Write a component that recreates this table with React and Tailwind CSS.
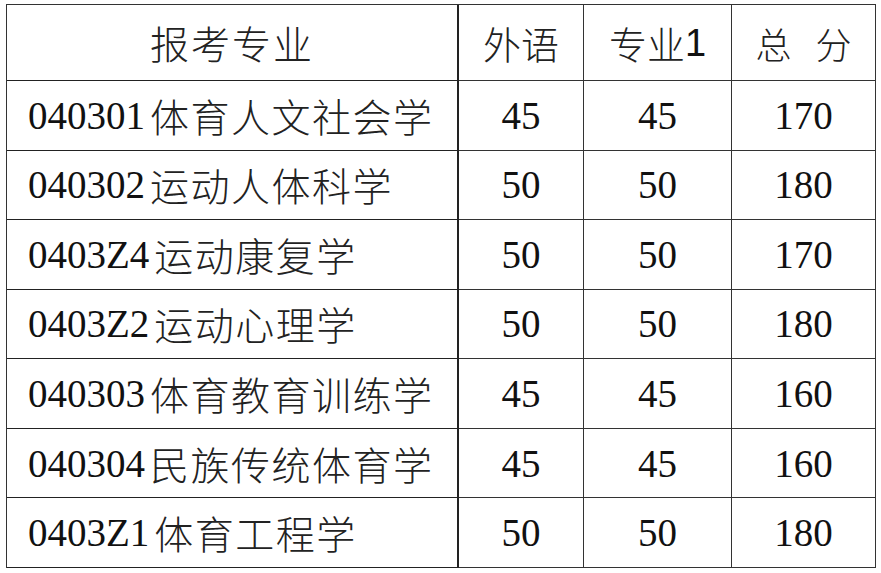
const rows = [
  ['040301', '体育人文社会学', '45', '45', '170'],
  ['040302', '运动人体科学', '50', '50', '180'],
  ['0403Z4', '运动康复学', '50', '50', '170'],
  ['0403Z2', '运动心理学', '50', '50', '180'],
  ['040303', '体育教育训练学', '45', '45', '160'],
  ['040304', '民族传统体育学', '45', '45', '160'],
  ['0403Z1', '体育工程学', '50', '50', '180'],
]

const serif = "font-['Liberation_Serif','Noto_Sans_CJK_SC',serif]"
const cjk = "font-['Noto_Sans_CJK_SC',sans-serif] font-light text-[#222]"

export default function App() {
  return (
    <div className="min-h-[573px] w-[881px] bg-white pl-[6px] pt-[4px] text-[#111]">
      <div className="grid w-fit grid-cols-[452px_125px_148px_144px] grid-rows-[76px_repeat(7,69.57px)] border-l border-t border-[#333]">
        {/* header */}
        <div className={`flex items-center justify-center border-b border-r-2 border-[#222] text-[39px] tracking-[2px] leading-none ${cjk}`}>
          报考专业
        </div>
        <div className={`flex items-center justify-center border-b border-r border-[#333] text-[38px] leading-none ${cjk}`}>
          外语
        </div>
        <div className="flex items-center justify-center border-b border-r border-[#333] text-[38px] leading-none">
          <span className={cjk}>专业</span>
          <span className="font-['Liberation_Sans',sans-serif]">1</span>
        </div>
        <div className={`flex items-center justify-center gap-[24px] border-b border-r border-[#333] text-[36px] leading-none ${cjk}`}>
          <span>总</span>
          <span>分</span>
        </div>

        {rows.map((r, i) => (
          <div key={i} className="contents">
            <div className="flex items-center border-b border-r-2 border-[#222] pl-[21px] text-[39px] leading-none">
              <span className={serif}>{r[0]}</span>
              <span className={`ml-[5px] tracking-[1.5px] ${cjk}`}>{r[1]}</span>
            </div>
            {r.slice(2).map((v, j) => (
              <div key={j} className={`flex items-center justify-center border-b border-r border-[#333] text-[39px] leading-none ${serif}`}>
                {v}
              </div>
            ))}
          </div>
        ))}
      </div>
    </div>
  )
}
